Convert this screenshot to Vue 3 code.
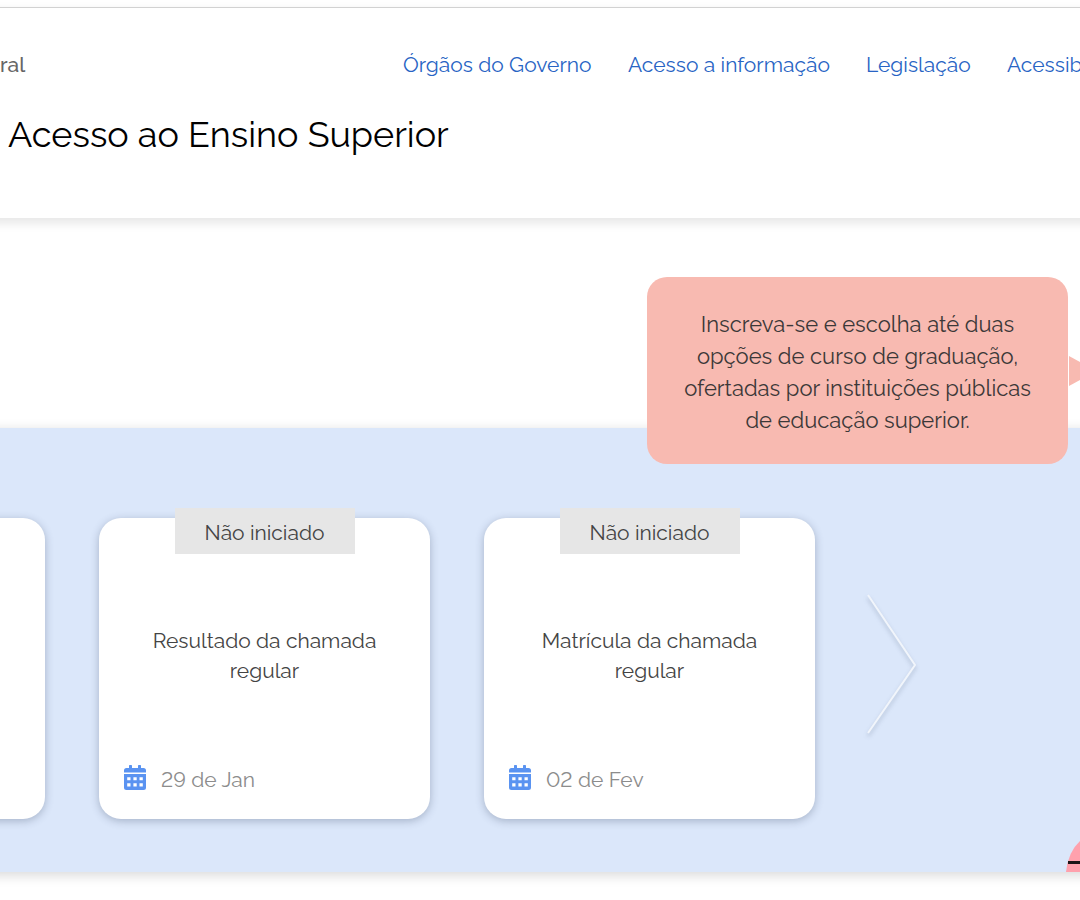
<script setup>
const links = ['Órgãos do Governo', 'Acesso a informação', 'Legislação', 'Acessib']
const steps = [
  { title: 'Resultado da chamada regular', date: '29 de Jan', status: 'Não iniciado' },
  { title: 'Matrícula da chamada regular', date: '02 de Fev', status: 'Não iniciado' },
]
</script>

<template>
  <div class="page">
    <header class="header">
      <div class="top">
        <span class="brand">ral</span>
        <nav class="links">
          <a v-for="link in links" :key="link" href="#">{{ link }}</a>
        </nav>
      </div>
      <h1>Acesso ao Ensino Superior</h1>
    </header>

    <main class="main">
      <aside class="bubble">
        <p>Inscreva-se e escolha até duas<br />opções de curso de graduação,<br />ofertadas por instituições públicas<br />de educação superior.</p>
        <svg class="pointer" viewBox="0 0 11 30" aria-hidden="true"><path d="M0 0 11 6V24L0 30Z" fill="#f8bab1" /></svg>
      </aside>

      <section class="schedule">
        <div class="track">
          <article class="card edge"></article>
          <article v-for="step in steps" :key="step.title" class="card">
            <span class="status">{{ step.status }}</span>
            <h2>{{ step.title }}</h2>
            <div class="date">
              <svg viewBox="0 0 22 25" aria-hidden="true">
                <path
                  fill="#5a93f1"
                  fill-rule="evenodd"
                  d="M0 7.500V5.500Q0 3 2.500 3H5V.7Q5 0 5.700 0H7.300Q8 0 8 .7V3H14V.7Q14 0 14.700 0H16.300Q17 0 17 .7V3H19.500Q22 3 22 5.500V7.500ZM0 9H22V22.500Q22 25 19.500 25H2.500Q0 25 0 22.500ZM3.200 12.300V15.300H6.500V12.300ZM9.400 12.300V15.300H12.700V12.300ZM15.500 12.300V15.300H18.800V12.300ZM3.200 18.300V21.500H6.500V18.300ZM9.400 18.300V21.500H12.700V18.300ZM15.500 18.300V21.500H18.800V18.300Z"
                />
              </svg>
              <span>{{ step.date }}</span>
            </div>
          </article>
          <button class="next" type="button" aria-label="Próximo">
            <svg viewBox="0 0 54 148" aria-hidden="true"><path d="M3 3 50 73 3 141" fill="none" stroke="#f1f5fb" stroke-width="2" /></svg>
          </button>
        </div>
        <svg class="figure" viewBox="0 0 14 32" aria-hidden="true">
          <path d="M0 32Q2 12 14 1V32Z" fill="#ffa1ad" />
          <path d="M2 22.500H14" stroke="#1c1416" stroke-width="3" />
        </svg>
      </section>
    </main>
  </div>
</template>

<style>
body {
  margin: 0;
  background: #fff;
}
</style>

<style scoped>
.page {
  padding-top: 7px;
  overflow: hidden;
  color: #444;
  font-family: Raleway, Lato, "Open Sans", sans-serif;
  font-size: 21px;
  font-variant-numeric: lining-nums;
  line-height: 30px;
}
.header {
  box-sizing: border-box;
  min-height: 212px;
  margin: 0 -20px;
  padding: 42px 20px 0;
  border-top: 1px solid #d2d2d2;
  border-bottom: 1px solid #ebebeb;
  box-shadow: 0 4px 10px rgba(0, 0, 0, 0.1);
}
.top {
  display: flex;
}
.brand {
  flex: 0 0 403px;
  color: #666;
  font-weight: 500;
}
.links {
  display: grid;
  grid-template-columns: 225px 238px 141px auto;
  white-space: nowrap;
}
.links a {
  color: #2864c4;
  text-decoration: none;
}
h1 {
  margin: 30px 8px 0;
  color: #000;
  font-size: 36px;
  font-weight: 400;
  line-height: 48px;
}
.main {
  position: relative;
  padding: 209px 0 40px;
}
.bubble {
  position: absolute;
  top: 58px;
  right: 12px;
  z-index: 1;
  box-sizing: border-box;
  width: 421px;
  padding: 31px 20px 28px;
  border-radius: 20px;
  background: #f8bab1;
  color: #3c3838;
  font-size: 22px;
  line-height: 32px;
  text-align: center;
}
.bubble p {
  margin: 0;
  white-space: nowrap;
}
.pointer {
  position: absolute;
  top: 79px;
  left: 100%;
  width: 11px;
  height: 30px;
  margin-left: 1px;
}
.schedule {
  position: relative;
  margin: 0 -20px;
  padding: 90px 20px 53px;
  background: #dbe7fa;
  box-shadow: 0 3px 12px rgba(0, 0, 0, 0.16);
}
.track {
  display: flex;
  gap: 54px;
  margin-left: -286px;
}
.card {
  display: flex;
  flex: 0 0 331px;
  flex-direction: column;
  align-items: center;
  box-sizing: border-box;
  min-height: 301px;
  padding: 0 25px 24px;
  border-radius: 22px;
  background: #fff;
  box-shadow: 0 2px 8px rgba(50, 65, 95, 0.32);
}
.status {
  box-sizing: border-box;
  width: 180px;
  margin-top: -10px;
  padding: 10px 0 6px;
  background: #e6e6e6;
  text-align: center;
}
h2 {
  width: 240px;
  margin: 72px 0 0;
  font-size: 21px;
  font-weight: 400;
  text-align: center;
}
.date {
  display: flex;
  gap: 15px;
  align-items: center;
  align-self: stretch;
  margin-top: auto;
  color: #8c8c8c;
}
.date svg {
  width: 22px;
  height: 25px;
  margin-bottom: 5px;
}
.next {
  align-self: center;
  margin: 0 0 5px -4px;
  padding: 0;
  border: 0;
  background: none;
  cursor: pointer;
}
.next svg {
  display: block;
  width: 54px;
  height: 148px;
  filter: drop-shadow(0 3px 2px rgba(60, 80, 110, 0.3));
}
.figure {
  position: absolute;
  right: 20px;
  bottom: 0;
  width: 14px;
  height: 32px;
}
</style>
